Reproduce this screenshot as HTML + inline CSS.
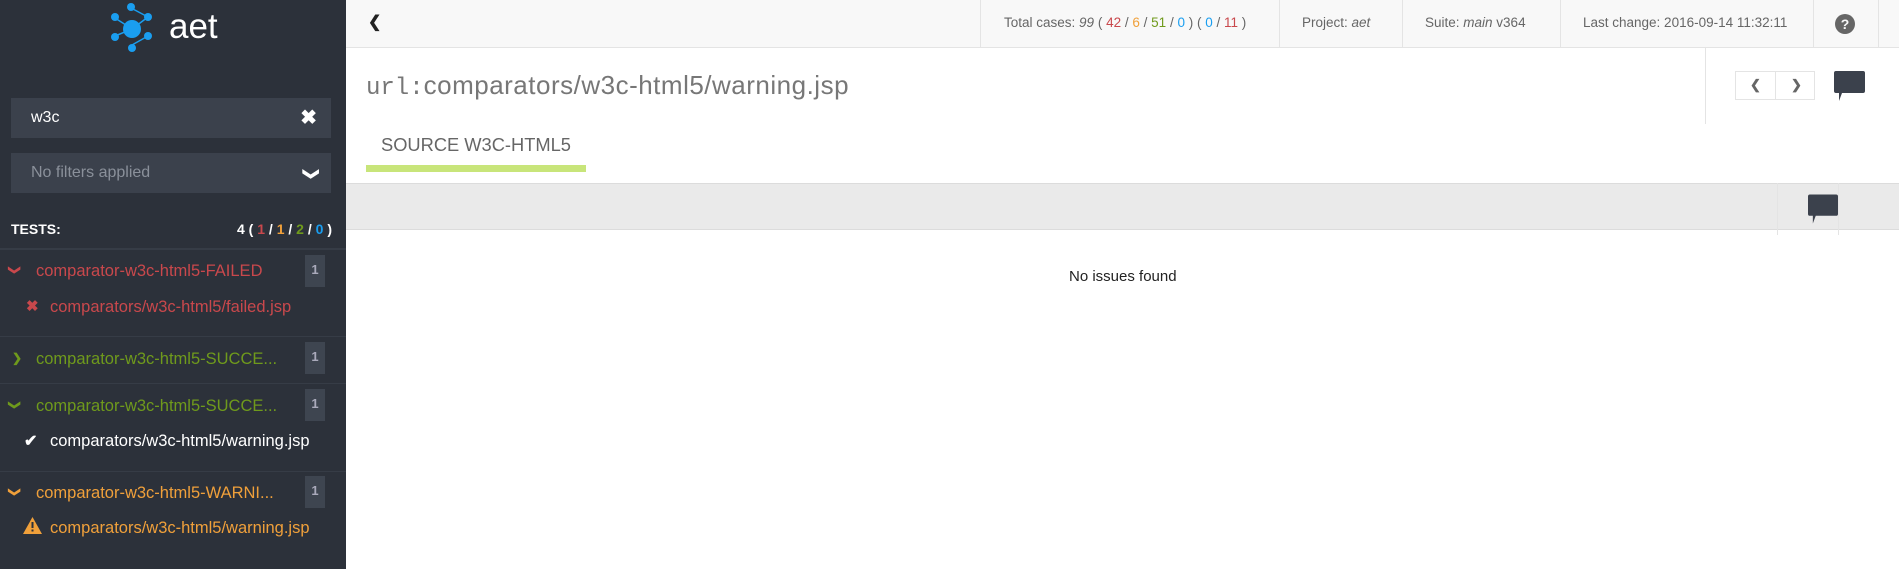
<!DOCTYPE html>
<html><head><meta charset="utf-8"><style>
*{box-sizing:border-box;margin:0;padding:0}
body{width:1899px;height:569px;overflow:hidden;font-family:"Liberation Sans",sans-serif;background:#fff;position:relative}
.sb{position:absolute;left:0;top:0;width:346px;height:569px;background:#2c313a;color:#fff}
.abs{position:absolute}
.box{position:absolute;left:11px;width:320px;height:40px;background:#3b414c;font-size:16px;line-height:40px;padding-left:20px}
.div{position:absolute;left:0;width:346px;height:1px;background:#363c46}
.grp{position:absolute;left:36px;font-size:16.5px;white-space:nowrap}
.badge{position:absolute;left:305px;width:20px;height:32px;background:#3e4550;color:#aab;font-size:13px;font-weight:bold;text-align:center;line-height:30px}
.item{position:absolute;left:50px;font-size:16.5px;white-space:nowrap}
.red{color:#c9484c}.grn{color:#6f9a1c}.org{color:#f0a03a}.blu{color:#1a9ef0}
.top{position:absolute;left:346px;top:0;width:1553px;height:48px;background:#f8f8f8;border-bottom:1px solid #e4e4e4}
.vl{position:absolute;top:0;width:1px;height:48px;background:#e4e4e4}
.tt{position:absolute;top:15px;font-size:13.5px;color:#666;white-space:nowrap}
</style></head><body>
<div class="sb">
 <svg class="abs" style="left:110px;top:2px" width="48" height="50" viewBox="0 0 48 50">
  <g stroke="#1a9ef0" stroke-width="1.5" fill="none"><path d="M21 6 L38 15 M5 16 L22 27 M5 34 L22 27 M38 34 L22 43 M22 27 L38 15"/></g>
  <g fill="#1a9ef0"><circle cx="22" cy="27" r="9"/><circle cx="21" cy="5" r="4"/><circle cx="38" cy="15" r="4"/><circle cx="5" cy="15" r="4"/><circle cx="5" cy="35" r="4"/><circle cx="38" cy="34" r="4"/><circle cx="22" cy="46" r="4"/></g>
 </svg>
 <div class="abs" style="left:169px;top:7px;font-size:35px;color:#fff">aet</div>
 <div class="box" style="top:98px;color:#fff">w3c<span class="abs" style="right:14px;top:0;font-size:20px;font-weight:bold">✖</span></div>
 <div class="box" style="top:153px;color:#8a909a">No filters applied<span class="abs" style="right:14px;top:1px;color:#fff;font-size:16px;font-weight:bold;transform:rotate(90deg)">❯</span></div>
 <div class="abs" style="left:11px;top:221px;font-size:14px;font-weight:bold">TESTS:</div>
 <div class="abs" style="right:14px;top:221px;font-size:14px;font-weight:bold">4 ( <span class="red">1</span> / <span class="org">1</span> / <span class="grn">2</span> / <span class="blu">0</span> )</div>
 <div class="div" style="top:248px;height:2px"></div>
 <div class="abs red" style="left:10px;top:263px;font-size:12px;transform:rotate(90deg);font-weight:bold">❯</div>
 <div class="grp red" style="top:262px">comparator-w3c-html5-FAILED</div><div class="badge" style="top:255px">1</div>
 <div class="abs red" style="left:26px;top:297px;font-size:15px;font-weight:bold">✖</div>
 <div class="item red" style="top:298px">comparators/w3c-html5/failed.jsp</div>
 <div class="div" style="top:336px"></div>
 <div class="abs grn" style="left:12px;top:351px;font-size:12px;font-weight:bold">❯</div>
 <div class="grp grn" style="top:350px">comparator-w3c-html5-SUCCE...</div><div class="badge" style="top:342px">1</div>
 <div class="div" style="top:383px"></div>
 <div class="abs grn" style="left:10px;top:398px;font-size:12px;transform:rotate(90deg);font-weight:bold">❯</div>
 <div class="grp grn" style="top:397px">comparator-w3c-html5-SUCCE...</div><div class="badge" style="top:389px">1</div>
 <div class="abs" style="left:24px;top:431px;font-size:16px;font-weight:bold">✔</div>
 <div class="item" style="top:432px">comparators/w3c-html5/warning.jsp</div>
 <div class="div" style="top:471px"></div>
 <div class="abs org" style="left:10px;top:485px;font-size:12px;transform:rotate(90deg);font-weight:bold">❯</div>
 <div class="grp org" style="top:484px">comparator-w3c-html5-WARNI...</div><div class="badge" style="top:476px">1</div>
 <svg class="abs" style="left:23px;top:517px" width="19" height="17" viewBox="0 0 19 17"><path d="M9.5 0 L19 17 H0Z" fill="#f0a03a"/><rect x="8.5" y="5" width="2" height="6" fill="#2c313a"/><rect x="8.5" y="12.5" width="2" height="2" fill="#2c313a"/></svg>
 <div class="item org" style="top:519px">comparators/w3c-html5/warning.jsp</div>
</div>
<div class="top">
 <div class="abs" style="left:22px;top:12px;font-size:16px;font-weight:bold;color:#222">❮</div>
 <div class="vl" style="left:634px"></div>
 <div class="tt" style="left:658px">Total cases: <i>99</i> ( <span class="red">42</span> / <span class="org">6</span> / <span class="grn">51</span> / <span class="blu">0</span> ) ( <span class="blu">0</span> / <span class="red">11</span> )</div>
 <div class="vl" style="left:933px"></div>
 <div class="tt" style="left:956px">Project: <i>aet</i></div>
 <div class="vl" style="left:1056px"></div>
 <div class="tt" style="left:1079px">Suite: <i>main</i> v364</div>
 <div class="vl" style="left:1214px"></div>
 <div class="tt" style="left:1237px">Last change: 2016-09-14 11:32:11</div>
 <div class="vl" style="left:1467px"></div>
 <div class="abs" style="left:1489px;top:14px;width:20px;height:20px;border-radius:50%;background:#666;color:#f8f8f8;font-weight:bold;font-size:14px;text-align:center;line-height:20px">?</div>
 <div class="vl" style="left:1532px"></div>
</div>
<div class="abs" style="left:366px;top:70px;font-size:26px;letter-spacing:0.5px;color:#777;white-space:nowrap"><span style="font-family:'Liberation Mono',monospace;font-size:24px;letter-spacing:0">url:</span>comparators/w3c-html5/warning.jsp</div>
<div class="abs" style="left:1705px;top:48px;width:1px;height:76px;background:#e4e4e4"></div>
<div class="abs" style="left:1735px;top:71px;width:80px;height:29px;border:1px solid #e4e4e4;background:#fff"><div class="abs" style="left:39px;top:0;width:1px;height:27px;background:#e4e4e4"></div><span class="abs" style="left:14px;top:5px;color:#666;font-size:13px;font-weight:bold">❮</span><span class="abs" style="left:55px;top:5px;color:#666;font-size:13px;font-weight:bold">❯</span></div>
<svg class="abs" style="left:1834px;top:71px" width="31" height="30" viewBox="0 0 31 30"><path d="M2 0 H29 Q31 0 31 2 V20 Q31 22 29 22 H8 L5 30 L5 22 H2 Q0 22 0 20 V2 Q0 0 2 0Z" fill="#3b414c"/></svg>
<div class="abs" style="left:381px;top:134px;font-size:18.3px;color:#666">SOURCE W3C-HTML5</div>
<div class="abs" style="left:366px;top:165px;width:220px;height:7px;background:#c8e57a"></div>
<div class="abs" style="left:346px;top:183px;width:1553px;height:47px;background:#eaeaea;border-top:1px solid #dcdcdc;border-bottom:1px solid #dcdcdc"></div>
<div class="abs" style="left:1777px;top:183px;width:1px;height:52px;background:#e4e4e4"></div>
<div class="abs" style="left:1838px;top:183px;width:1px;height:52px;background:#e4e4e4"></div>
<svg class="abs" style="left:1808px;top:194px" width="30" height="30" viewBox="0 0 31 30"><path d="M2 0 H29 Q31 0 31 2 V20 Q31 22 29 22 H8 L5 30 L5 22 H2 Q0 22 0 20 V2 Q0 0 2 0Z" fill="#3b414c"/></svg>
<div class="abs" style="left:1069px;top:268px;font-size:15px;color:#222">No issues found</div>
</body></html>
